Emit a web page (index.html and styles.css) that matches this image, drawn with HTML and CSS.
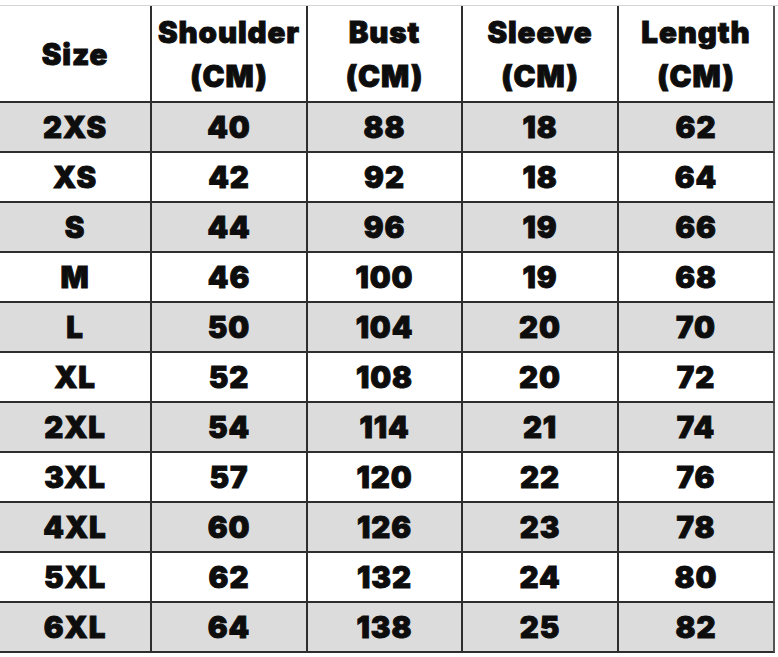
FILE: index.html
```html
<!DOCTYPE html>
<html lang="en">
<head>
<meta charset="utf-8">
<title>Size Chart</title>
<link rel="stylesheet" href="styles.css">
</head>
<body>
<div class="sheet">
  <div class="chart">
    <div class="cell head">Size</div>
    <div class="cell head">Shoulder<br>(CM)</div>
    <div class="cell head">Bust<br>(CM)</div>
    <div class="cell head">Sleeve<br>(CM)</div>
    <div class="cell head">Length<br>(CM)</div>

    <div class="cell alt">2XS</div><div class="cell alt">40</div><div class="cell alt">88</div><div class="cell alt">18</div><div class="cell alt">62</div>
    <div class="cell">XS</div><div class="cell">42</div><div class="cell">92</div><div class="cell">18</div><div class="cell">64</div>
    <div class="cell alt">S</div><div class="cell alt">44</div><div class="cell alt">96</div><div class="cell alt">19</div><div class="cell alt">66</div>
    <div class="cell">M</div><div class="cell">46</div><div class="cell">100</div><div class="cell">19</div><div class="cell">68</div>
    <div class="cell alt">L</div><div class="cell alt">50</div><div class="cell alt">104</div><div class="cell alt">20</div><div class="cell alt">70</div>
    <div class="cell">XL</div><div class="cell">52</div><div class="cell">108</div><div class="cell">20</div><div class="cell">72</div>
    <div class="cell alt">2XL</div><div class="cell alt">54</div><div class="cell alt">114</div><div class="cell alt">21</div><div class="cell alt">74</div>
    <div class="cell">3XL</div><div class="cell">57</div><div class="cell">120</div><div class="cell">22</div><div class="cell">76</div>
    <div class="cell alt">4XL</div><div class="cell alt">60</div><div class="cell alt">126</div><div class="cell alt">23</div><div class="cell alt">78</div>
    <div class="cell">5XL</div><div class="cell">62</div><div class="cell">132</div><div class="cell">24</div><div class="cell">80</div>
    <div class="cell alt">6XL</div><div class="cell alt">64</div><div class="cell alt">138</div><div class="cell alt">25</div><div class="cell alt">82</div>
  </div>
</div>
</body>
</html>
```

FILE: styles.css
```css
* { box-sizing: border-box; }

html, body {
  margin: 0;
  padding: 0;
  background: #ffffff;
}

.sheet {
  margin-top: 5px;
  border-top: 1px solid #d4d4d4;
  width: 778px;
  height: 652px;
  overflow: hidden;
}

.chart {
  display: grid;
  grid-template-columns: 152px 156px 155px 156px 156px;
  grid-template-rows: 97px repeat(11, 50px);
  width: 775px;
  font-family: "Inter", "Liberation Sans", sans-serif;
  font-weight: 900;
  font-size: 29.5px;
  color: #0d0d0d;
  -webkit-text-stroke: 0.9px #0d0d0d;
}

.cell {
  display: flex;
  align-items: center;
  justify-content: center;
  text-align: center;
  border-right: 2px solid #2e2e2e;
  border-bottom: 2px solid #2e2e2e;
  background: #ffffff;
  letter-spacing: 0.9px;
}

.cell:nth-child(5n) {
  border-right-color: #555555;
}

.head {
  line-height: 44px;
  padding-top: 1px;
}

.alt {
  background: #dcdcdc;
}
```
